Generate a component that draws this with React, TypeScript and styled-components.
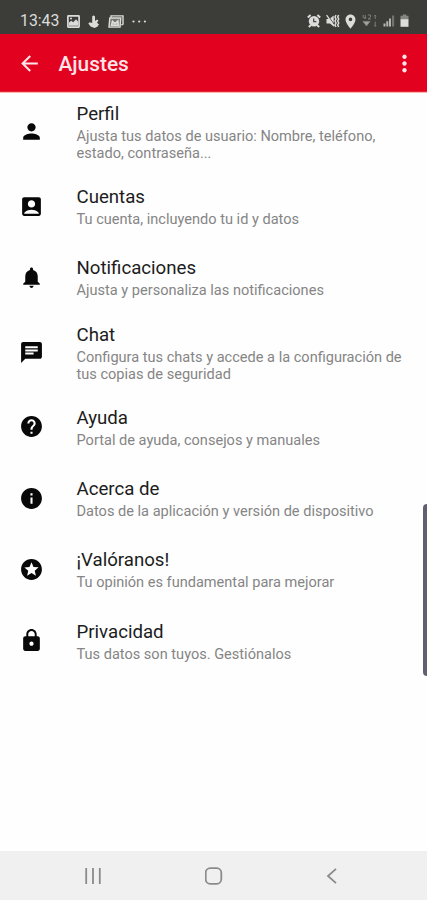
import React from 'react';
import styled, { createGlobalStyle } from 'styled-components';
import type { IconType } from 'react-icons';
import {
  MdAccountBox, MdArrowBack, MdChat, MdHelp, MdInfo, MdLock, MdMoreVert,
  MdNotifications, MdPerson, MdPlace, MdStars,
} from 'react-icons/md';

const GlobalStyle = createGlobalStyle`
  * { box-sizing: border-box; }
  body { margin: 0; background: #fff; }
`;

const Screen = styled.div`
  position: relative;
  display: flex;
  flex-direction: column;
  width: 427px;
  height: 900px;
  overflow: hidden;
  background: #fefefe;
  font-family: Roboto, sans-serif;
`;

const StatusBar = styled.header`
  display: flex;
  align-items: center;
  justify-content: space-between;
  height: 34px;
  padding: 8px 18px 0 20px;
  background: #3c3c39;
  color: #dcdcda;
`;

const StatusGroup = styled.div<{ $gap: number }>`
  display: flex;
  align-items: center;
  gap: ${({ $gap }) => $gap}px;
  svg { display: block; }
`;

const Clock = styled.span`
  width: 39px;
  font-size: 15.8px;
  line-height: 18px;
  white-space: nowrap;
`;

const AppBar = styled.div`
  display: flex;
  align-items: center;
  height: 58px;
  padding: 2px 9px 0 17px;
  background: #e30120;
  color: #ffe4e8;
  border-bottom: 1px solid #e5222f;
`;

const AppTitle = styled.h1`
  flex: 1;
  margin: 0 0 0 16.5px;
  font-size: 20.9px;
  font-weight: 500;
  line-height: 26px;
`;

const IconButton = styled.button`
  display: flex;
  padding: 0;
  border: 0;
  background: none;
  color: inherit;
`;

const List = styled.main`
  flex: 1;
  border-top: 1px solid #fbb4ad;
`;

const Row = styled.section<{ $height: number }>`
  display: flex;
  align-items: center;
  height: ${({ $height }) => $height}px;
  padding-left: 19px;
`;

const RowIcon = styled.div`
  display: flex;
  width: 57.5px;
  padding-bottom: 1px;
  color: #080808;
`;

const RowText = styled.div`
  white-space: pre-line;
`;

const RowTitle = styled.h2`
  margin: 0 0 2px;
  font-size: 18.65px;
  font-weight: 400;
  line-height: 24px;
  color: #1c1c1c;
`;

const RowNote = styled.p`
  margin: 0;
  font-size: 14.57px;
  line-height: 17px;
  color: #858585;
`;

const EdgeHandle = styled.div`
  position: absolute;
  top: 504px;
  right: 0;
  width: 4px;
  height: 172px;
  border-radius: 4px 0 0 4px;
  background: #625f70;
`;

const NavBar = styled.nav`
  display: flex;
  align-items: center;
  justify-content: space-between;
  height: 49px;
  padding: 1px 86px 0 82px;
  background: #f0f0f0;
  svg { display: block; fill: none; stroke: #8b8b8b; stroke-width: 1.8; }
`;

type Item = { icon: IconType; title: string; note: string; height: number };

const items: Item[] = [
  { icon: MdPerson, title: 'Perfil', note: 'Ajusta tus datos de usuario: Nombre, teléfono,\nestado, contraseña...', height: 78 },
  { icon: MdAccountBox, title: 'Cuentas', note: 'Tu cuenta, incluyendo tu id y datos', height: 71.3 },
  { icon: MdNotifications, title: 'Notificaciones', note: 'Ajusta y personaliza las notificaciones', height: 71.3 },
  { icon: MdChat, title: 'Chat', note: 'Configura tus chats y accede a la configuración de\ntus copias de seguridad', height: 78 },
  { icon: MdHelp, title: 'Ayuda', note: 'Portal de ayuda, consejos y manuales', height: 71.3 },
  { icon: MdInfo, title: 'Acerca de', note: 'Datos de la aplicación y versión de dispositivo', height: 71.3 },
  { icon: MdStars, title: '¡Valóranos!', note: 'Tu opinión es fundamental para mejorar', height: 71.3 },
  { icon: MdLock, title: 'Privacidad', note: 'Tus datos son tuyos. Gestiónalos', height: 71.3 },
];

const PictureIcon = () => (
  <svg width="13" height="13" viewBox="0 0 13 13">
    <rect x="0.9" y="0.9" width="11.2" height="11.2" rx="0.5" fill="none" stroke="currentColor" strokeWidth="1.7" />
    <path d="M2 10.8V7.4l2.2-1.6 2 1.4L9 4.2l2.2 2.5v4.1z" fill="currentColor" />
    <circle cx="4" cy="3.6" r="1" fill="currentColor" />
  </svg>
);

const TouchIcon = () => (
  <svg width="12" height="13" viewBox="0 0 12 13" fill="currentColor">
    <path d="M4.2 1.5Q5.6-.5 7 1.5V6l2-1.6 1.4 1L9 7.8l2 1.7-1.7 2.3-2.8 1.1-3.9-1.4L.3 8.6l1.5-1.4 2.4.8z" />
  </svg>
);

const GalleryIcon = () => (
  <svg width="16" height="13" viewBox="0 0 16 13" fill="none" stroke="currentColor" strokeWidth="1.4">
    <path d="M3 2.6V.9h12v8.3l-1.6 1" />
    <path d="M1 12.1 1.8 3h11l-.8 9.1z" fill="currentColor" fillOpacity="0.35" />
    <path d="m3.4 10.4 1-4.2 2.6 2.4 3-2.8.3 4.6z" fill="currentColor" fillOpacity="0.7" />
  </svg>
);

const DotsIcon = () => (
  <svg width="15" height="13" viewBox="0 0 15 13" fill="currentColor">
    <circle cx="1.5" cy="6.5" r="1.1" /><circle cx="7.2" cy="6.5" r="1.1" /><circle cx="12.9" cy="6.5" r="1.1" />
  </svg>
);

const AlarmIcon = () => (
  <svg width="14" height="14" viewBox="0 0 14 14" fill="none" stroke="currentColor">
    <circle cx="7" cy="7.2" r="5.2" fill="currentColor" stroke="none" />
    <path d="M.8 3.4 3.6 1M13.2 3.4 10.4 1M1.8 13 4 11M12.2 13 10 11" strokeWidth="2" />
    <path d="M6.7 4.4v3.3h2.7" stroke="#4b4b48" strokeWidth="1.3" />
  </svg>
);

const MuteIcon = () => (
  <svg width="14" height="14" viewBox="0 0 14 14">
    <path d="M.5 5h3l4.2-3.5v11L4 9.5H.5z" fill="currentColor" />
    <path d="m1.6 1.2 7 9.8" stroke="#3c3c39" strokeWidth="1" />
    <path d="m.6 1.2 7.6 11" stroke="currentColor" strokeWidth="1.3" />
    <path d="m10 1-1 2 1 2-1 2 1 2-1 2 1 2M12.7 1l-1 2 1 2-1 2 1 2-1 2 1 2" fill="none" stroke="currentColor" strokeWidth="1.5" />
  </svg>
);

const PinBox = styled.span`
  display: flex;
  margin: 0 -2.5px;
`;

const DataIcon = () => (
  <svg width="17" height="14" viewBox="0 0 17 14" fill="none" stroke="#7d7d7a">
    <path d="M2.2.8v3h3M4.3 1V5M7 1h2.5v2L7 5h3" />
    <path d="M2 7.4h7L5.5 12z" fill="#a3a3a0" />
    <path d="M14.2 1v4M14.2 7.5v5M13.2 2.2l1-1 1 1M13.2 11.2l1 1 1-1" />
  </svg>
);

const SignalIcon = () => (
  <svg width="12" height="14" viewBox="0 0 12 14">
    <path d="M.5 9.5h2v3h-2zM3.3 7.2h2v5.3h-2zM6 4.5h2v8H6z" fill="#b4b4b1" />
    <path d="M9 1.5h2.2v11H9z" fill="#72726f" />
  </svg>
);

const BatteryIcon = () => (
  <svg width="9" height="14" viewBox="0 0 9 14">
    <path d="M2.8.5h3.4v1.3h2.3v4h-8v-4h2.3z" fill="#858582" />
    <path d="M.5 5.2h8v7.6h-8z" fill="#dededb" />
  </svg>
);

export default function App() {
  return (
    <>
      <GlobalStyle />
      <Screen>
        <StatusBar>
          <StatusGroup $gap={8}>
            <Clock>13:43</Clock>
            <PictureIcon /><TouchIcon /><GalleryIcon /><DotsIcon />
          </StatusGroup>
          <StatusGroup $gap={4.8}>
            <AlarmIcon /><MuteIcon />
            <PinBox><MdPlace size={17} /></PinBox>
            <DataIcon /><SignalIcon /><BatteryIcon />
          </StatusGroup>
        </StatusBar>
        <AppBar>
          <IconButton aria-label="Atrás"><MdArrowBack size={25} /></IconButton>
          <AppTitle>Ajustes</AppTitle>
          <IconButton aria-label="Más opciones"><MdMoreVert size={27} /></IconButton>
        </AppBar>
        <List>
          {items.map(({ icon: Icon, title, note, height }) => (
            <Row key={title} $height={height}>
              <RowIcon><Icon size={25} /></RowIcon>
              <RowText>
                <RowTitle>{title}</RowTitle>
                <RowNote>{note}</RowNote>
              </RowText>
            </Row>
          ))}
        </List>
        <EdgeHandle />
        <NavBar>
          <svg width="22" height="18" viewBox="0 0 22 18"><path d="M4.2 1v16M11 1v16M17.8 1v16" /></svg>
          <svg width="18" height="18" viewBox="0 0 18 18"><rect x="0.7" y="1.2" width="15.6" height="15.6" rx="4.5" /></svg>
          <svg width="18" height="18" viewBox="0 0 18 18"><path d="M13 1.8 5 9l8 7.2" /></svg>
        </NavBar>
      </Screen>
    </>
  );
}
